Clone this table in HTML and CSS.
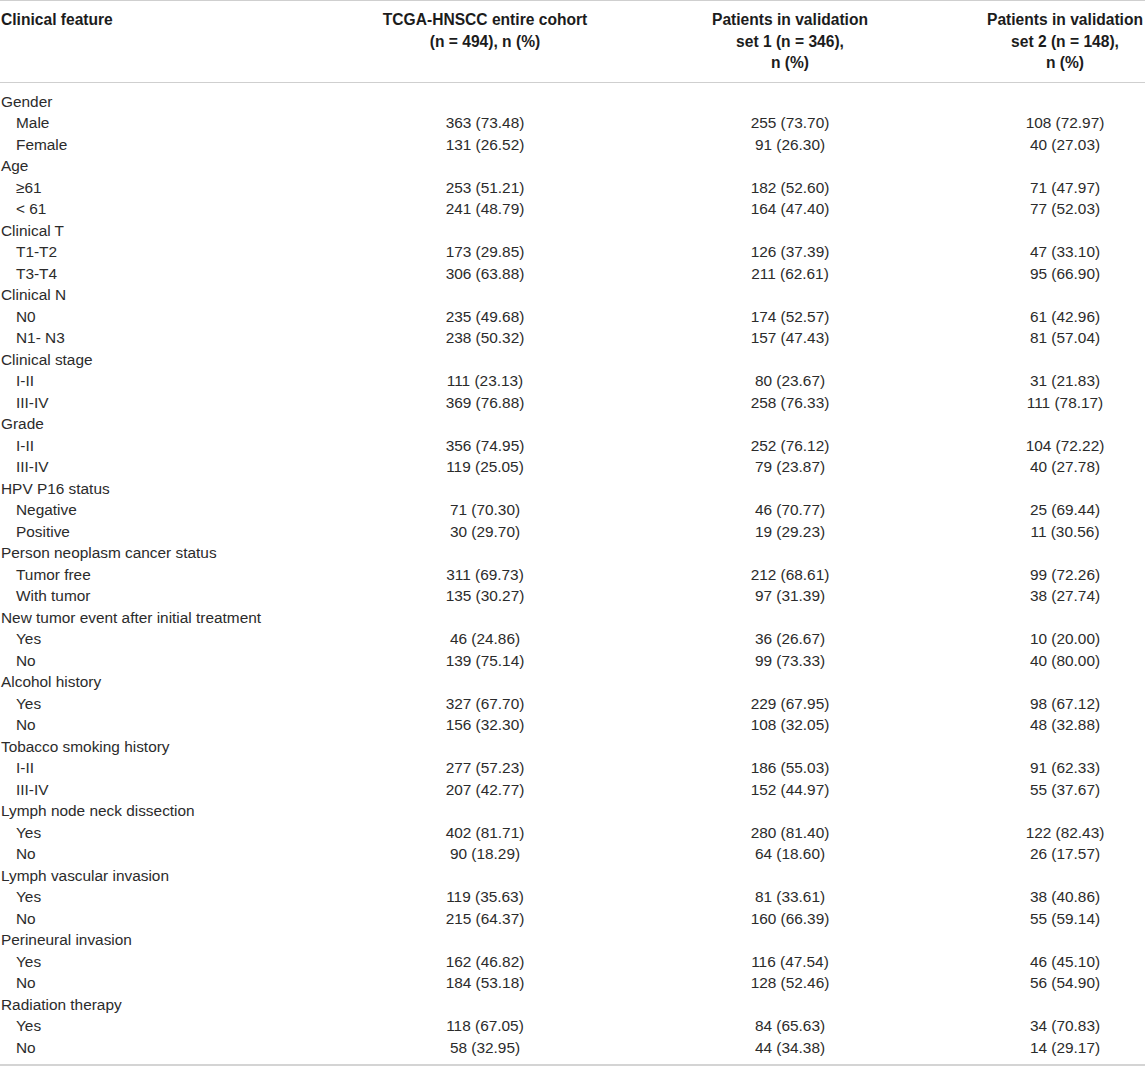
FILE: index.html
```html
<!DOCTYPE html>
<html>
<head>
<meta charset="utf-8">
<link rel="stylesheet" href="styles.css">
</head>
<body>
<table class="tbl">
<colgroup>
<col class="c1"><col class="c2"><col class="c3"><col class="c4">
</colgroup>
<thead>
<tr>
<th class="lft">Clinical feature</th>
<th>TCGA-HNSCC entire cohort<br>(n = 494), n (%)</th>
<th>Patients in validation<br>set 1 (n = 346),<br>n (%)</th>
<th>Patients in validation<br>set 2 (n = 148),<br>n (%)</th>
</tr>
</thead>
<tbody>
<tr class="first"><td class="cat">Gender</td><td></td><td></td><td></td></tr>
<tr><td class="sub">Male</td><td>363 (73.48)</td><td>255 (73.70)</td><td>108 (72.97)</td></tr>
<tr><td class="sub">Female</td><td>131 (26.52)</td><td>91 (26.30)</td><td>40 (27.03)</td></tr>
<tr><td class="cat">Age</td><td></td><td></td><td></td></tr>
<tr><td class="sub">≥61</td><td>253 (51.21)</td><td>182 (52.60)</td><td>71 (47.97)</td></tr>
<tr><td class="sub">&lt; 61</td><td>241 (48.79)</td><td>164 (47.40)</td><td>77 (52.03)</td></tr>
<tr><td class="cat">Clinical T</td><td></td><td></td><td></td></tr>
<tr><td class="sub">T1-T2</td><td>173 (29.85)</td><td>126 (37.39)</td><td>47 (33.10)</td></tr>
<tr><td class="sub">T3-T4</td><td>306 (63.88)</td><td>211 (62.61)</td><td>95 (66.90)</td></tr>
<tr><td class="cat">Clinical N</td><td></td><td></td><td></td></tr>
<tr><td class="sub">N0</td><td>235 (49.68)</td><td>174 (52.57)</td><td>61 (42.96)</td></tr>
<tr><td class="sub">N1- N3</td><td>238 (50.32)</td><td>157 (47.43)</td><td>81 (57.04)</td></tr>
<tr><td class="cat">Clinical stage</td><td></td><td></td><td></td></tr>
<tr><td class="sub">I-II</td><td>111 (23.13)</td><td>80 (23.67)</td><td>31 (21.83)</td></tr>
<tr><td class="sub">III-IV</td><td>369 (76.88)</td><td>258 (76.33)</td><td>111 (78.17)</td></tr>
<tr><td class="cat">Grade</td><td></td><td></td><td></td></tr>
<tr><td class="sub">I-II</td><td>356 (74.95)</td><td>252 (76.12)</td><td>104 (72.22)</td></tr>
<tr><td class="sub">III-IV</td><td>119 (25.05)</td><td>79 (23.87)</td><td>40 (27.78)</td></tr>
<tr><td class="cat">HPV P16 status</td><td></td><td></td><td></td></tr>
<tr><td class="sub">Negative</td><td>71 (70.30)</td><td>46 (70.77)</td><td>25 (69.44)</td></tr>
<tr><td class="sub">Positive</td><td>30 (29.70)</td><td>19 (29.23)</td><td>11 (30.56)</td></tr>
<tr><td class="cat">Person neoplasm cancer status</td><td></td><td></td><td></td></tr>
<tr><td class="sub">Tumor free</td><td>311 (69.73)</td><td>212 (68.61)</td><td>99 (72.26)</td></tr>
<tr><td class="sub">With tumor</td><td>135 (30.27)</td><td>97 (31.39)</td><td>38 (27.74)</td></tr>
<tr><td class="cat">New tumor event after initial treatment</td><td></td><td></td><td></td></tr>
<tr><td class="sub">Yes</td><td>46 (24.86)</td><td>36 (26.67)</td><td>10 (20.00)</td></tr>
<tr><td class="sub">No</td><td>139 (75.14)</td><td>99 (73.33)</td><td>40 (80.00)</td></tr>
<tr><td class="cat">Alcohol history</td><td></td><td></td><td></td></tr>
<tr><td class="sub">Yes</td><td>327 (67.70)</td><td>229 (67.95)</td><td>98 (67.12)</td></tr>
<tr><td class="sub">No</td><td>156 (32.30)</td><td>108 (32.05)</td><td>48 (32.88)</td></tr>
<tr><td class="cat">Tobacco smoking history</td><td></td><td></td><td></td></tr>
<tr><td class="sub">I-II</td><td>277 (57.23)</td><td>186 (55.03)</td><td>91 (62.33)</td></tr>
<tr><td class="sub">III-IV</td><td>207 (42.77)</td><td>152 (44.97)</td><td>55 (37.67)</td></tr>
<tr><td class="cat">Lymph node neck dissection</td><td></td><td></td><td></td></tr>
<tr><td class="sub">Yes</td><td>402 (81.71)</td><td>280 (81.40)</td><td>122 (82.43)</td></tr>
<tr><td class="sub">No</td><td>90 (18.29)</td><td>64 (18.60)</td><td>26 (17.57)</td></tr>
<tr><td class="cat">Lymph vascular invasion</td><td></td><td></td><td></td></tr>
<tr><td class="sub">Yes</td><td>119 (35.63)</td><td>81 (33.61)</td><td>38 (40.86)</td></tr>
<tr><td class="sub">No</td><td>215 (64.37)</td><td>160 (66.39)</td><td>55 (59.14)</td></tr>
<tr><td class="cat">Perineural invasion</td><td></td><td></td><td></td></tr>
<tr><td class="sub">Yes</td><td>162 (46.82)</td><td>116 (47.54)</td><td>46 (45.10)</td></tr>
<tr><td class="sub">No</td><td>184 (53.18)</td><td>128 (52.46)</td><td>56 (54.90)</td></tr>
<tr><td class="cat">Radiation therapy</td><td></td><td></td><td></td></tr>
<tr><td class="sub">Yes</td><td>118 (67.05)</td><td>84 (65.63)</td><td>34 (70.83)</td></tr>
<tr class="last"><td class="sub">No</td><td>58 (32.95)</td><td>44 (34.38)</td><td>14 (29.17)</td></tr>
</tbody>
</table>
</body>
</html>
```
FILE: styles.css
```css
html, body {
  margin: 0;
  padding: 0;
  background: #fff;
}
.tbl {
  width: 1145px;
  border-collapse: collapse;
  table-layout: fixed;
  font-family: "Liberation Sans", Arial, sans-serif;
  font-size: 15.4px;
  color: #2b2b2b;
  border-top: 1px solid #cfcfcf;
  border-bottom: 2px solid #d4d4d4;
}
.c1 { width: 375px; }
.c2 { width: 220px; }
.c3 { width: 390px; }
.c4 { width: 160px; }
.tbl th {
  font-weight: bold;
  font-size: 15.6px;
  color: #1c1c1c;
  text-align: center;
  vertical-align: top;
  line-height: 21.5px;
  padding: 8px 0 8px 0;
  border-bottom: 1px solid #cfcfcf;
  white-space: nowrap;
}
.tbl th.lft {
  text-align: left;
  padding-left: 1px;
}
.tbl td {
  text-align: center;
  line-height: 21.5px;
  padding: 0;
  white-space: nowrap;
}
.tbl td.cat {
  text-align: left;
  padding-left: 1px;
}
.tbl td.sub {
  text-align: left;
  padding-left: 16px;
}
.tbl tr.first td {
  padding-top: 8px;
}
.tbl tr.last td {
  padding-bottom: 6px;
}
```
